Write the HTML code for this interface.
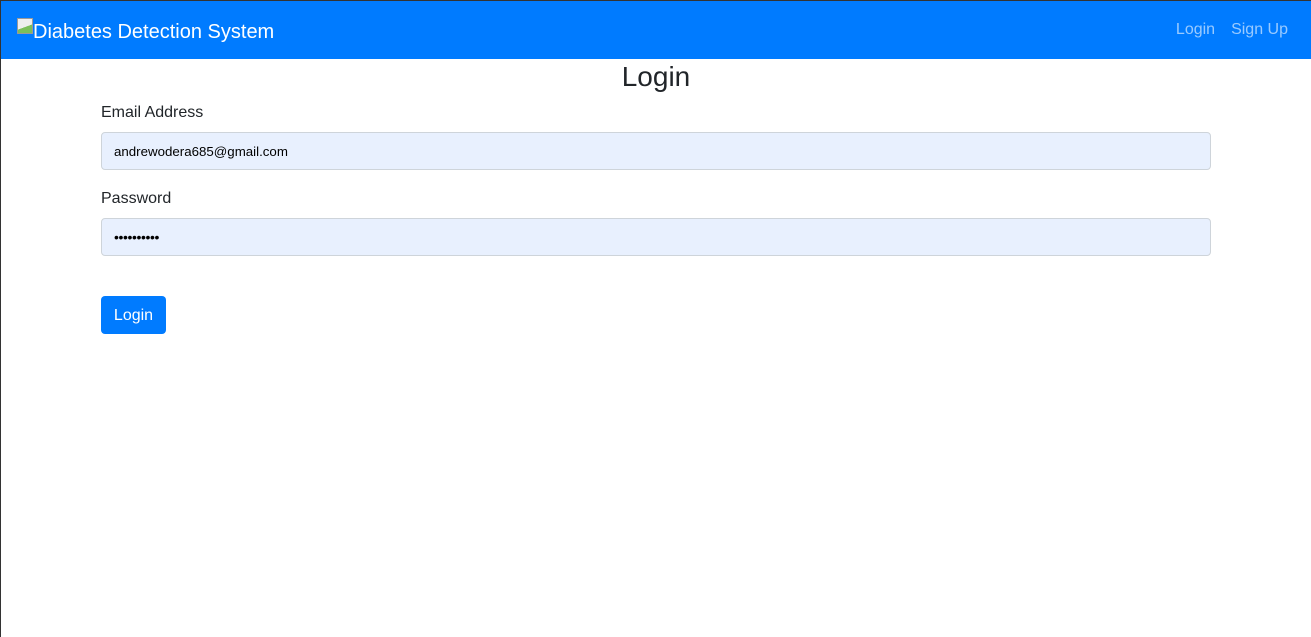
<!DOCTYPE html>
<html><head><style>
*{box-sizing:border-box;margin:0;padding:0}
html,body{width:1311px;height:637px;overflow:hidden;background:#fff;font-family:"Liberation Sans",sans-serif;color:#212529}
body{border-top:1px solid #333;border-left:1px solid #333;position:relative}
.nav{position:absolute;left:0;top:0;width:1310px;height:58px;background:#007bff}
.brand{position:absolute;left:16px;top:17px;color:#fff;font-size:20px;line-height:28px}
.icon{display:inline-block;width:16px;height:16px;vertical-align:top;margin-top:0px;background:linear-gradient(160deg,#eee 0 55%,#7bbf5a 56%);border:1px solid #999}
.links{position:absolute;right:23px;top:20px;font-size:16px;color:rgba(255,255,255,.6)}
.links span{margin-left:16px}
h1{position:absolute;left:0;width:1310px;top:59px;text-align:center;font-size:28px;font-weight:400;line-height:33px}
label{position:absolute;left:100px;font-size:16px}
.inp{position:absolute;left:100px;width:1110px;height:38px;background:#e8f0fe;border:1px solid #ced4da;border-radius:4px;font-size:13.3px;padding-left:12px;line-height:36px;color:#000}
.btn{position:absolute;left:100px;top:295px;width:65px;height:38px;background:#007bff;color:#fff;border-radius:4px;font-size:16px;text-align:center;line-height:39px}
</style></head><body>
<div class="nav"><div class="brand"><span class="icon"></span>Diabetes Detection System</div>
<div class="links"><span>Login</span><span>Sign Up</span></div></div>
<h1>Login</h1>
<label style="top:103px">Email Address</label>
<div class="inp" style="top:131px;line-height:38px">andrewodera685@gmail.com</div>
<label style="top:189px">Password</label>
<div class="inp" style="top:217px;font-size:14px;letter-spacing:-0.4px">••••••••••</div>
<div class="btn">Login</div>
</body></html>
